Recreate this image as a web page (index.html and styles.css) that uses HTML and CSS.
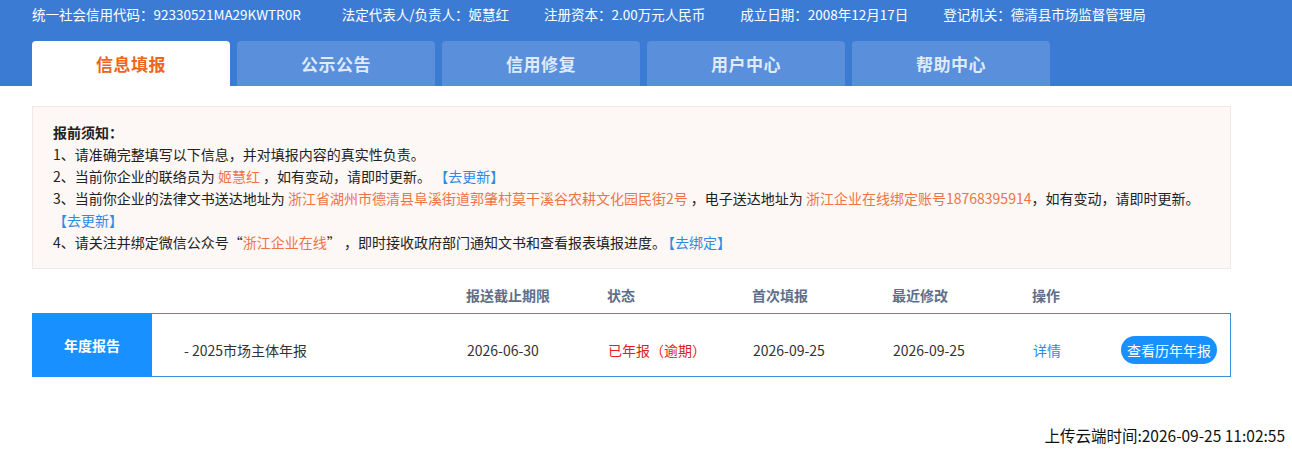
FILE: index.html
```html
<!DOCTYPE html>
<html lang="zh-CN">
<head>
<meta charset="utf-8">
<title>信息填报</title>
<link rel="stylesheet" href="styles.css">
</head>
<body>
<header class="top">
  <div class="info">
    <span>统一社会信用代码：92330521MA29KWTR0R</span>
    <span>法定代表人/负责人：姬慧红</span>
    <span>注册资本：2.00万元人民币</span>
    <span>成立日期：2008年12月17日</span>
    <span>登记机关：德清县市场监督管理局</span>
  </div>
  <nav class="tabs">
    <a class="tab active">信息填报</a>
    <a class="tab">公示公告</a>
    <a class="tab">信用修复</a>
    <a class="tab">用户中心</a>
    <a class="tab">帮助中心</a>
  </nav>
</header>
<main class="main">
  <section class="notice">
    <p class="title">报前须知：</p>
    <p>1、请准确完整填写以下信息，并对填报内容的真实性负责。</p>
    <p>2、当前你企业的联络员为 <span class="hl">姬慧红</span> ，如有变动，请即时更新。 <a class="link">【去更新】</a></p>
    <p>3、当前你企业的法律文书送达地址为 <span class="hl">浙江省湖州市德清县阜溪街道郭肇村莫干溪谷农耕文化园民街2号</span> ，电子送达地址为 <span class="hl">浙江企业在线绑定账号18768395914</span>，如有变动，请即时更新。<br><a class="link">【去更新】</a></p>
    <p>4、请关注并绑定微信公众号“<span class="hl">浙江企业在线</span>” ，即时接收政府部门通知文书和查看报表填报进度。<a class="link gap">【去绑定】</a></p>
  </section>
  <div class="thead">
    <span></span><span></span>
    <span>报送截止期限</span>
    <span>状态</span>
    <span>首次填报</span>
    <span>最近修改</span>
    <span>操作</span>
    <span></span>
  </div>
  <div class="row">
    <div class="label">年度报告</div>
    <div class="cell name">- 2025市场主体年报</div>
    <div class="cell">2026-06-30</div>
    <div class="cell status">已年报（逾期）</div>
    <div class="cell">2026-09-25</div>
    <div class="cell">2026-09-25</div>
    <div class="cell"><a class="link">详情</a></div>
    <div class="cell"><button class="btn">查看历年年报</button></div>
  </div>
</main>
<footer class="foot">上传云端时间:2026-09-25 11:02:55</footer>
</body>
</html>
```
FILE: styles.css
```css
* { box-sizing: border-box; }
body {
  margin: 0;
  font-family: "Noto Sans CJK SC", "Noto Sans", sans-serif;
  color: #333;
  background: #fff;
  width: 1292px;
  height: 449px;
  overflow: hidden;
}
.top {
  background: #3b7bd4;
  height: 86px;
  display: flex;
  flex-direction: column;
}
.info {
  display: flex;
  gap: 35px;
  padding-left: 32px;
  height: 41px;
  padding-top: 4px;
  font-size: 13.5px;
  color: #fff;
  line-height: 20px;
}
.info span:nth-child(2) { margin-left: 6px; }
.tabs {
  display: flex;
  gap: 7px;
  padding-left: 32px;
  height: 45px;
}
.tab {
  width: 198px;
  height: 45px;
  border-radius: 4px 4px 0 0;
  background: #5a8fdb;
  color: #dfeafb;
  font-weight: bold;
  font-size: 17px;
  display: flex;
  align-items: center;
  justify-content: center;
  letter-spacing: 0.5px;
}
.tab.active {
  background: #fff;
  color: #f0651a;
}
.main {
  padding: 20px 61px 0 32px;
}
.notice {
  background: #fdf7f6;
  border: 1px solid #f1e9e7;
  padding: 14px 20px 15px 20px;
  font-size: 14px;
  line-height: 22px;
  color: #222;
}
.notice p { margin: 0; }
.notice .title { font-weight: bold; }
.hl { color: #ee7447; }
.link { color: #2f8ae4; cursor: pointer; }
.link.gap { margin-left: 2px; }
.thead, .row {
  display: grid;
  grid-template-columns: 120px 314px 141px 145px 140px 140px 88px 1fr;
  align-items: center;
  font-size: 14px;
}
.thead {
  height: 44px;
  padding-top: 8px;
  color: #5d6f8c;
  font-weight: bold;
}
.row {
  height: 64px;
  border: 1px solid #3a8fd8;
  color: #333;
}
.cell { padding-top: 9px; }
.label {
  background: #1890ff;
  color: #fff;
  font-weight: bold;
  display: flex;
  align-items: center;
  justify-content: center;
  margin: -1px 0 -1px -1px;
  height: calc(100% + 2px);
  width: 120px;
}
.name { padding-left: 31px; }
.status { color: #e0201d; }
.btn {
  font-family: inherit;
  font-size: 14px;
  color: #fff;
  background: #1890ff;
  border: none;
  border-radius: 14px;
  height: 28px;
  width: 96px;
  padding: 0;
}
.foot {
  margin-top: 47px;
  text-align: right;
  padding-right: 7px;
  font-size: 15.5px;
  color: #111;
}
```
